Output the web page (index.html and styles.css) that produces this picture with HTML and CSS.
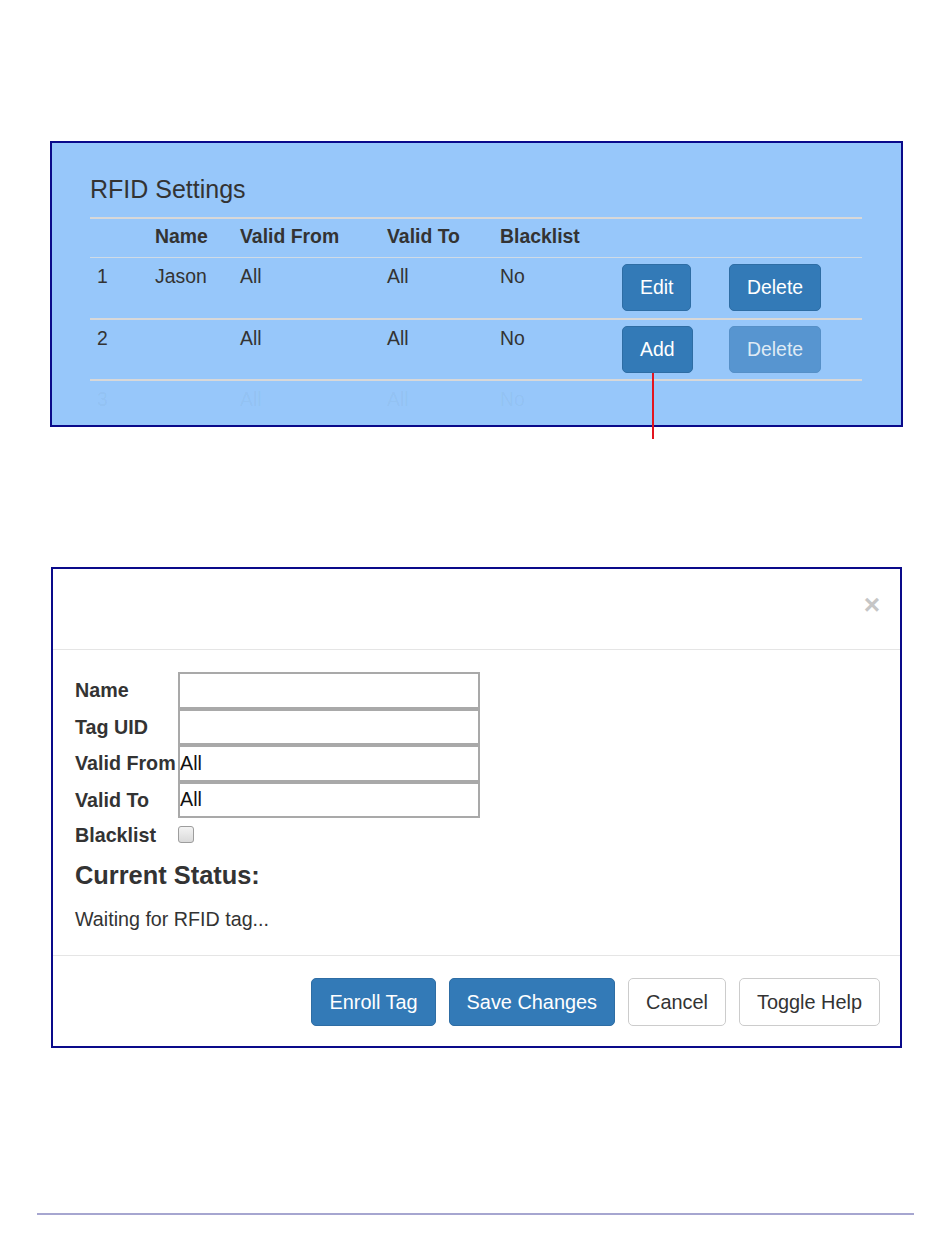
FILE: index.html
```html
<!DOCTYPE html>
<html lang="en">
<head>
<meta charset="utf-8">
<title>RFID Settings</title>
<link rel="stylesheet" href="styles.css">
</head>
<body>
<div class="figure">
  <section class="panel">
    <h3 class="panel-title">RFID Settings</h3>
    <table class="rfid-table">
      <colgroup>
        <col class="c-num"><col class="c-name"><col class="c-from"><col class="c-to"><col class="c-black"><col class="c-act1"><col class="c-act2">
      </colgroup>
      <thead>
        <tr><th></th><th>Name</th><th>Valid From</th><th>Valid To</th><th>Blacklist</th><th></th><th></th></tr>
      </thead>
      <tbody>
        <tr class="row-light">
          <td>1</td><td>Jason</td><td>All</td><td>All</td><td>No</td>
          <td class="act"><button class="btn btn-primary">Edit</button></td>
          <td class="act"><button class="btn btn-primary">Delete</button></td>
        </tr>
        <tr>
          <td>2</td><td></td><td>All</td><td>All</td><td>No</td>
          <td class="act"><button class="btn btn-primary">Add</button></td>
          <td class="act"><button class="btn btn-primary is-disabled">Delete</button></td>
        </tr>
        <tr class="row-faded">
          <td>3</td><td></td><td>All</td><td>All</td><td>No</td><td></td><td></td>
        </tr>
      </tbody>
    </table>
  </section>
  <span class="pointer"></span>
</div>

<section class="modal">
  <div class="modal-header">
    <span class="close">&times;</span>
  </div>
  <div class="modal-body">
    <table class="form-table">
      <tr><th>Name</th><td><input class="field" type="text" value=""></td></tr>
      <tr><th>Tag UID</th><td><input class="field" type="text" value=""></td></tr>
      <tr><th>Valid From</th><td><input class="field" type="text" value="All"></td></tr>
      <tr><th>Valid To</th><td><input class="field" type="text" value="All"></td></tr>
      <tr class="check-row"><th>Blacklist</th><td><input class="check" type="checkbox"></td></tr>
    </table>
    <h4 class="status-title">Current Status:</h4>
    <p class="status-text">Waiting for RFID tag...</p>
  </div>
  <div class="modal-footer">
    <button class="btn btn-lg btn-primary">Enroll Tag</button>
    <button class="btn btn-lg btn-primary">Save Changes</button>
    <button class="btn btn-lg btn-default">Cancel</button>
    <button class="btn btn-lg btn-default">Toggle Help</button>
  </div>
</section>

<div class="page-rule"></div>
</body>
</html>
```

FILE: styles.css
```css
* { box-sizing: border-box; }

body {
  margin: 0;
  font-family: "Liberation Sans", Arial, sans-serif;
  font-size: 19.4px;
  color: #333;
  background: #fff;
}

.figure {
  position: relative;
  padding-top: 141px;
}

.panel {
  margin-left: 50px;
  width: 853px;
  height: 286px;
  border: 2px solid #0a0a8a;
  background: #97c7fa;
  padding: 0 39px 0 38px;
  overflow: hidden;
}

.panel-title {
  margin: 31px 0 13px;
  font-size: 25px;
  line-height: 30px;
  font-weight: normal;
  color: #333;
}

.rfid-table {
  width: 772px;
  table-layout: fixed;
  border-collapse: separate;
  border-spacing: 0;
}

.c-num { width: 58px; }
.c-name { width: 85px; }
.c-from { width: 147px; }
.c-to { width: 113px; }
.c-black { width: 121px; }
.c-act1 { width: 107px; }
.c-act2 { width: 141px; }

.rfid-table th {
  text-align: left;
  font-weight: bold;
  line-height: 24px;
  padding: 5px 7px 9px;
  border-top: 2px solid #d8d8d8;
}

.rfid-table td {
  line-height: 24px;
  padding: 6px 7px 6px;
  vertical-align: top;
  border-top: 2px solid #d8d8d8;
  white-space: nowrap;
}

.rfid-table tr.row-light td {
  border-top: 1px solid #cfdbe6;
  padding-bottom: 7px;
}

.rfid-table td.act { padding-left: 8px; }

.rfid-table tr.row-faded td { color: rgba(51, 51, 51, 0.05); }

.btn {
  display: inline-block;
  font-family: "Liberation Sans", Arial, sans-serif;
  font-size: 19.4px;
  line-height: 27px;
  padding: 9px 17px;
  border: 1px solid transparent;
  border-radius: 5px;
  white-space: nowrap;
  cursor: pointer;
}

.btn-primary {
  color: #fff;
  background: #337ab7;
  border-color: #2e6da4;
}

.btn-primary.is-disabled {
  background: #5795d0;
  border-color: #5690c8;
  color: #dfeaf5;
}

.btn-default {
  color: #333;
  background: #fff;
  border-color: #ccc;
}

.btn-lg {
  font-size: 19.9px;
  line-height: 26px;
  padding: 10px 17px;
}

.pointer {
  position: absolute;
  left: 652px;
  top: 373px;
  width: 2px;
  height: 66px;
  background: #e3151f;
}

.modal {
  margin: 140px 0 0 51px;
  width: 851px;
  border: 2px solid #0a0a8a;
  background: #fff;
  font-size: 19.7px;
}

.modal-header {
  height: 81px;
  border-bottom: 1px solid #e5e5e5;
  padding: 0 20px;
  display: flex;
  align-items: center;
  justify-content: flex-end;
}

.close {
  font-size: 28px;
  font-weight: bold;
  line-height: 1;
  color: #c6c6c6;
  margin-top: -9px;
}

.modal-body {
  padding: 22px 22px 22px;
}

.form-table {
  border-collapse: collapse;
  border-spacing: 0;
}

.form-table th {
  width: 103px;
  padding: 0;
  text-align: left;
  font-weight: bold;
  white-space: nowrap;
  vertical-align: middle;
  line-height: 24px;
}

.form-table td {
  padding: 0;
  vertical-align: middle;
}

.field {
  display: block;
  width: 302px;
  height: 36.5px;
  margin: 0;
  padding: 0 2px 0 0;
  border: 2px solid #a9a9a9;
  font-family: "Liberation Sans", Arial, sans-serif;
  font-size: 19.7px;
  color: #111;
  background: #fff;
}

.check-row th,
.check-row td { height: 33px; }

.check {
  display: block;
  appearance: none;
  -webkit-appearance: none;
  width: 16px;
  height: 17px;
  margin: 0;
  border: 1px solid #9d9d9d;
  border-radius: 3px;
  background: linear-gradient(#f3f3f3, #dadada);
}

.status-title {
  margin: 9px 0 16px;
  font-size: 25.4px;
  line-height: 30px;
  font-weight: bold;
  color: #333;
}

.status-text {
  margin: 0;
  line-height: 27px;
}

.modal-footer {
  border-top: 1px solid #e5e5e5;
  padding: 22px 20px 20px;
  display: flex;
  justify-content: flex-end;
  gap: 13px;
}

.page-rule {
  margin: 165px 0 0 37px;
  width: 877px;
  height: 2px;
  background: #a6a6d0;
}
```
